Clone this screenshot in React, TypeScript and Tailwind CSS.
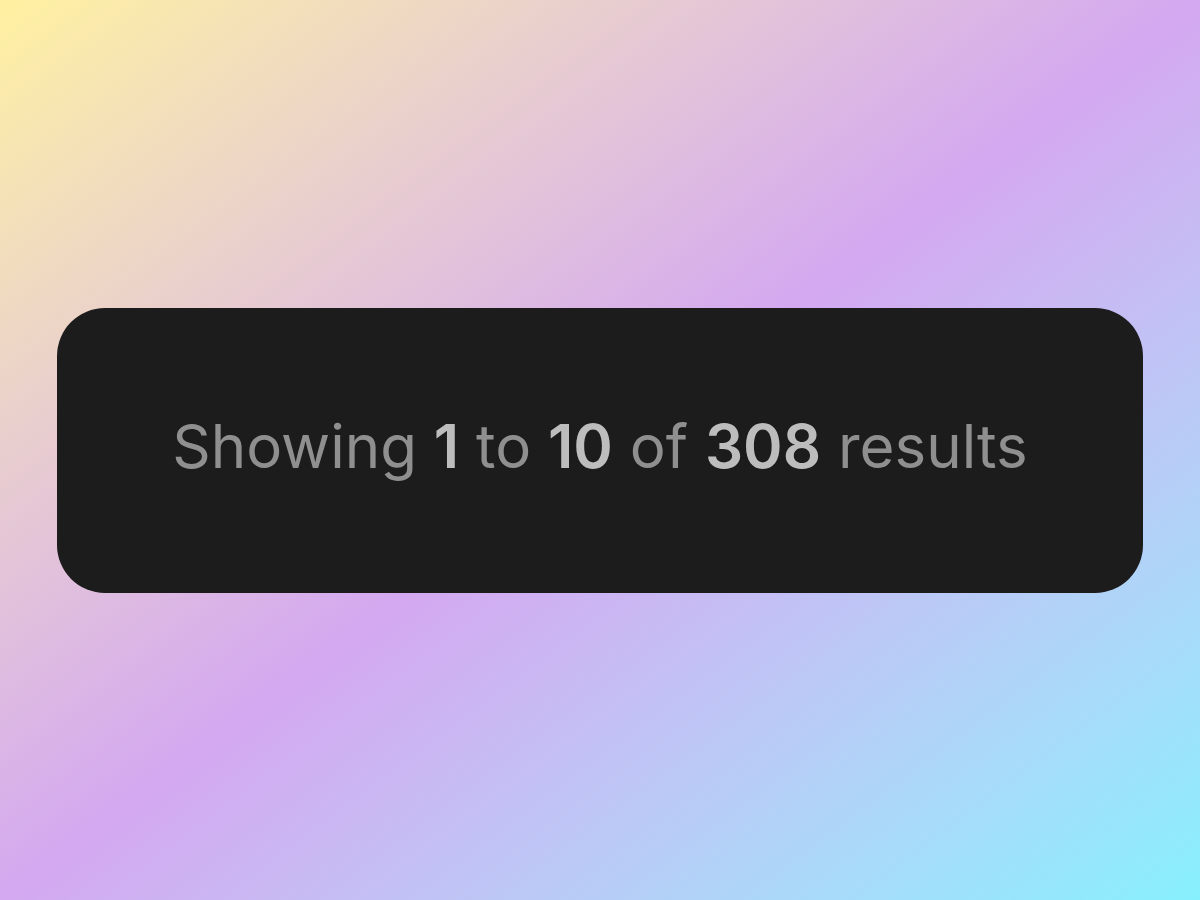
import React from 'react';

const App = () => {
    return (
        <div className="w-[1200px] h-[900px] flex items-center justify-center bg-linear-to-br from-[#fff1a0] via-[#d4a8f0] to-[#86f0fd]">
            <div className="w-[1086px] h-[285px] rounded-[48px] bg-[#1c1c1c] flex items-center justify-center">
                <p className="text-[60px] leading-none text-[#8f8f8f] font-['Inter',sans-serif] -mt-2">
                    Showing <span className="font-semibold text-[#bdbdbd]">1</span> to{' '}
                    <span className="font-semibold text-[#bdbdbd]">10</span> of{' '}
                    <span className="font-semibold text-[#bdbdbd]">308</span> results
                </p>
            </div>
        </div>
    );
};

export default App;
